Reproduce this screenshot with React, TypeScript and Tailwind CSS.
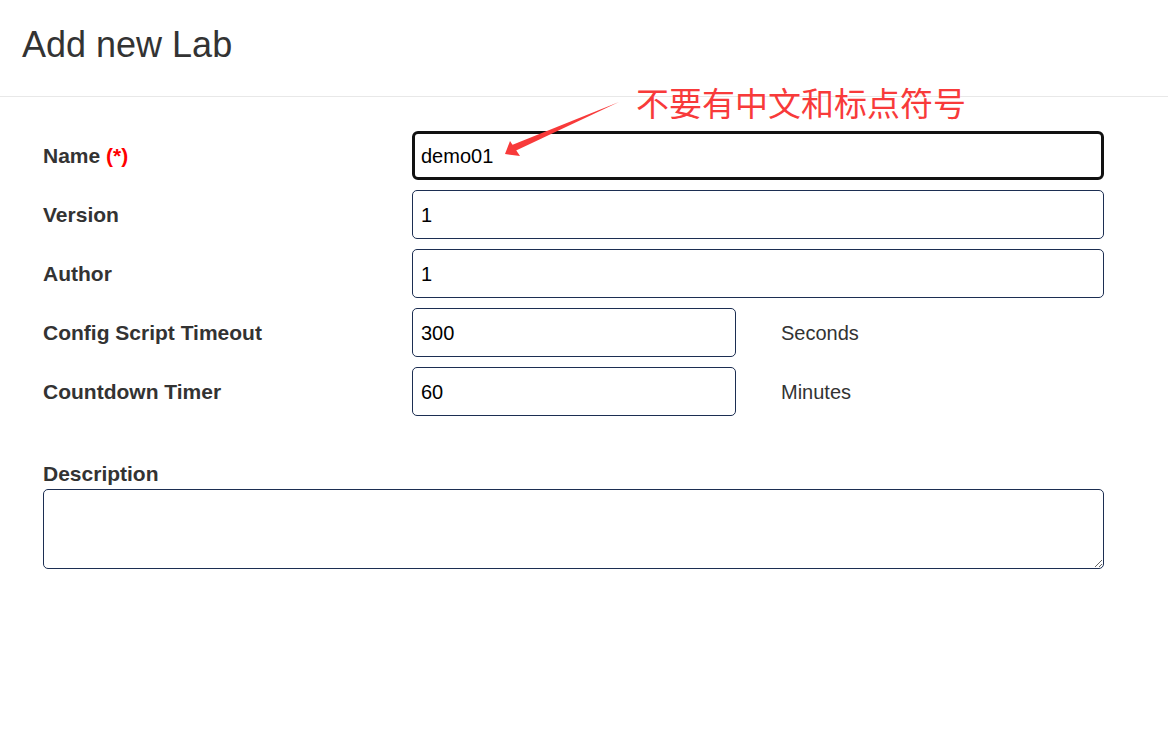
import React, { useState } from "react";

const font = { fontFamily: '"Liberation Sans", Arial, sans-serif' };

type RowProps = {
  label: React.ReactNode;
  value: string;
  short?: boolean;
  unit?: string;
  focused?: boolean;
};

function FormRow({ label, value, short, unit, focused }: RowProps) {
  const [val, setVal] = useState(value);
  return (
    <div className="flex items-center h-[49px]">
      <label className="w-[369px] shrink-0 text-[21px] font-bold text-[#333]">{label}</label>
      <input
        value={val}
        onChange={e => setVal(e.target.value)}
        className={
          (short ? "w-[324px] " : "flex-1 ") +
          (focused
            ? "h-[49px] rounded-[6px] border-[3px] border-[#111] pl-[6px] pt-[1px] "
            : "h-[49px] rounded-[5px] border border-[#1c2e52] pl-[8px] pt-[1px] ") +
          "text-[20px] text-black outline-none bg-white"
        }
      />
      {unit && <span className="ml-[45px] text-[20px] text-[#333]">{unit}</span>}
    </div>
  );
}

export default function App() {
  const [desc, setDesc] = useState("");

  return (
    <div className="min-h-screen bg-white relative" style={font}>
      {/* Header */}
      <div className="h-[97px] border-b border-[#e8e8e8] flex items-center pl-[22px] pb-[6px]">
        <h1 className="text-[36px] text-[#333] font-normal">Add new Lab</h1>
      </div>

      {/* Form */}
      <div className="pl-[43px] pr-[64px] pt-[34px]">
        <div className="flex flex-col gap-[10px]">
          <FormRow
            label={<>Name <span className="text-[#f00]">(*)</span></>}
            value="demo01"
            focused
          />
          <FormRow label="Version" value="1" />
          <FormRow label="Author" value="1" />
          <FormRow label="Config Script Timeout" value="300" short unit="Seconds" />
          <FormRow label="Countdown Timer" value="60" short unit="Minutes" />
        </div>

        <div className="mt-[46px]">
          <label className="block text-[21px] font-bold text-[#333] leading-[24px]">Description</label>
          <textarea
            value={desc}
            onChange={e => setDesc(e.target.value)}
            className="block w-full h-[80px] mt-[3px] rounded-[5px] border border-[#1c2e52] outline-none text-[20px] p-2"
          />
        </div>
      </div>

      {/* Annotation overlay */}
      <div
        className="absolute left-[636px] top-[80px] text-[33px] leading-[44px] text-[#f83a3a] whitespace-nowrap"
        style={{ fontFamily: '"Noto Sans CJK SC", "Liberation Sans", sans-serif' }}
      >
        不要有中文和标点符号
      </div>
      <svg className="absolute left-[500px] top-[98px]" width="125" height="62" viewBox="500 98 125 62">
        <polygon points="619,102 515,151 512,145" fill="#f83a3a" />
        <polygon points="505,154 510,141 520,156" fill="#f83a3a" />
      </svg>
    </div>
  );
}
